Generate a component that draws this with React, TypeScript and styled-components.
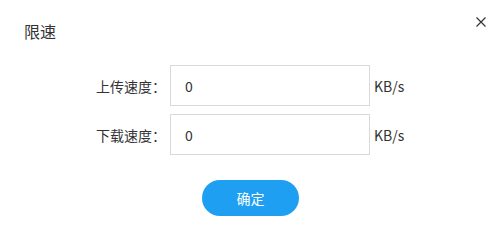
import React from "react";
import styled, { createGlobalStyle } from "styled-components";

const Global = createGlobalStyle`
  html, body { margin: 0; padding: 0; background: #fff; }
  body { font-family: "Noto Sans CJK SC", "Microsoft YaHei", sans-serif; color: #333; }
`;

const Dialog = styled.div`
  position: relative;
  width: 500px;
  height: 241px;
  background: #fff;
  box-sizing: border-box;
  display: flex;
  flex-direction: column;
`;

const Header = styled.div`
  height: 60px;
  display: flex;
  align-items: center;
  padding-left: 24px;
`;

const Title = styled.h2`
  margin: 0;
  font-size: 16px;
  font-weight: 400;
  line-height: 16px;
  color: #333;
  padding-top: 2px;
`;

const Close = styled.button`
  position: absolute;
  top: 15px;
  right: 12px;
  width: 14px;
  height: 14px;
  padding: 0;
  border: 0;
  background: transparent;
  display: flex;
  align-items: center;
  justify-content: center;
  cursor: pointer;
`;

const Form = styled.div`
  margin-top: 5px;
  display: flex;
  flex-direction: column;
  gap: 8px;
  padding-left: 90px;
`;

const Row = styled.div`
  display: flex;
  align-items: center;
  height: 41px;
`;

const Label = styled.label`
  width: 76px;
  text-align: right;
  font-size: 14px;
  line-height: 16px;
  color: #333;
  margin-right: 4px;
`;

const Input = styled.input`
  box-sizing: border-box;
  width: 200px;
  height: 41px;
  border: 1px solid #d9d9d9;
  padding: 0 14px;
  font-family: "Noto Sans CJK SC", sans-serif;
  font-size: 14px;
  color: #333;
  outline: none;
  background: #fff;
`;

const Unit = styled.span`
  margin-left: 4px;
  font-size: 14px;
  line-height: 16px;
  color: #333;
`;

const Footer = styled.div`
  margin-top: 25px;
  display: flex;
  justify-content: center;
`;

const Confirm = styled.button`
  width: 97px;
  height: 36px;
  border: 0;
  border-radius: 18px;
  background: #1e9ff2;
  color: #fff;
  font-family: "Noto Sans CJK SC", sans-serif;
  font-size: 14px;
  padding: 0;
  margin-left: 1px;
  cursor: pointer;
`;

export default function App() {
  return (
    <>
      <Global />
      <Dialog>
        <Header>
          <Title>限速</Title>
        </Header>
        <Close aria-label="close">
          <svg width="10" height="10" viewBox="0 0 10 10">
            <path d="M0.5 0.5 L9.5 9.5 M9.5 0.5 L0.5 9.5" stroke="#333" strokeWidth="1.2" />
          </svg>
        </Close>
        <Form>
          <Row>
            <Label>上传速度：</Label>
            <Input defaultValue="0" />
            <Unit>KB/s</Unit>
          </Row>
          <Row>
            <Label>下载速度：</Label>
            <Input defaultValue="0" />
            <Unit>KB/s</Unit>
          </Row>
        </Form>
        <Footer>
          <Confirm>确定</Confirm>
        </Footer>
      </Dialog>
    </>
  );
}
